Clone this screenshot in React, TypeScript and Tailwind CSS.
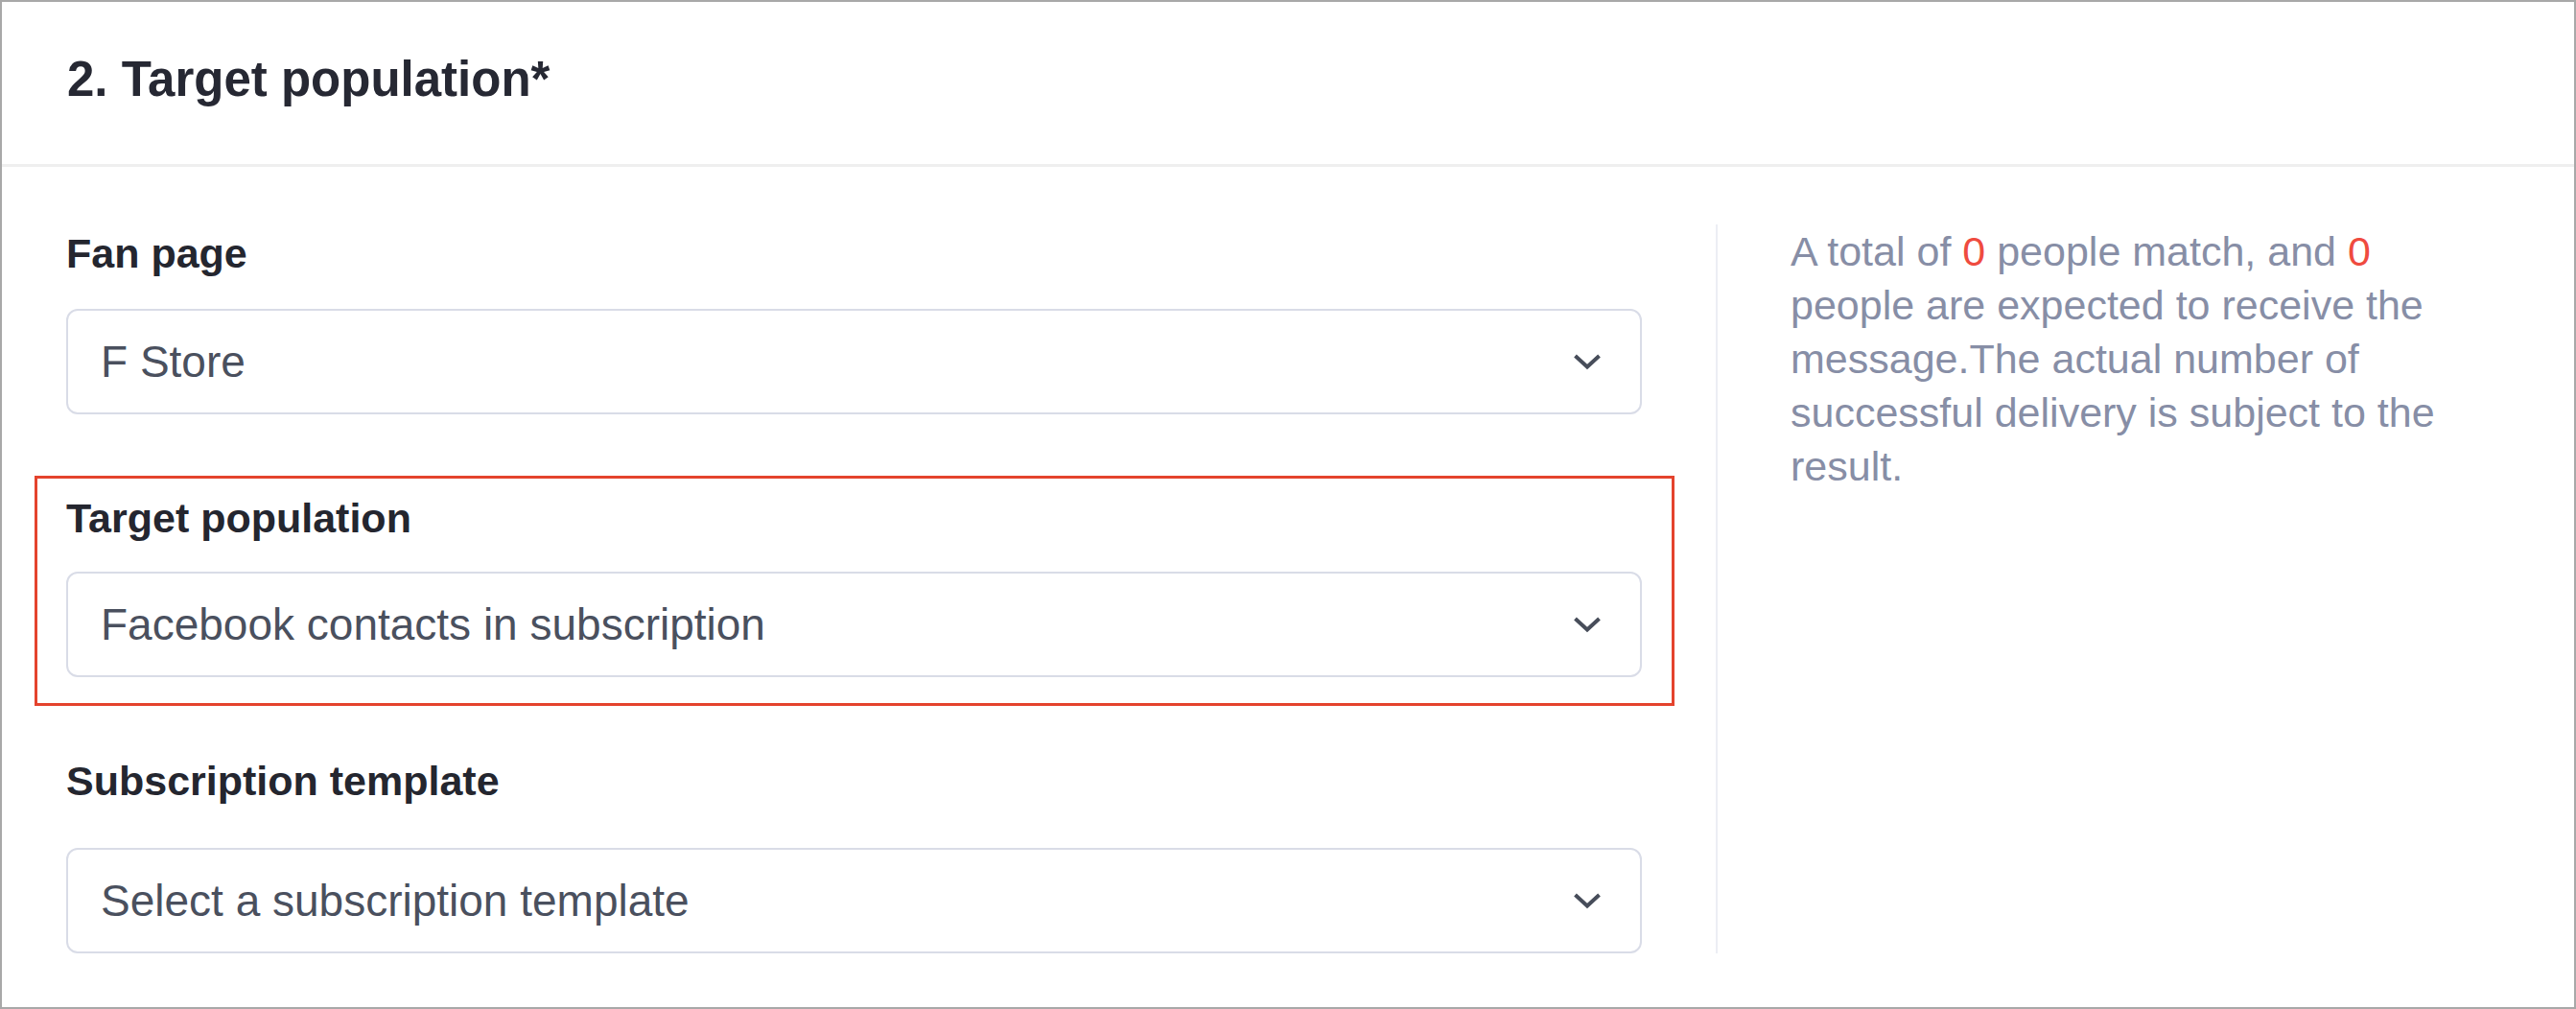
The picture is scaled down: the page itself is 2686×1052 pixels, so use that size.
import React from 'react';

const font = { fontFamily: '"Liberation Sans", Arial, sans-serif' };

function Chevron() {
  return (
    <svg width="30" height="18" viewBox="0 0 30 18" fill="none" className="shrink-0">
      <path d="M2.5 3 L15 14.5 L27.5 3" stroke="#474d5a" strokeWidth="4" strokeLinejoin="miter" />
    </svg>
  );
}

function SelectBox({ value }: { value: string }) {
  return (
    <div className="flex h-[110px] items-center justify-between rounded-[12px] border-2 border-[#d9dce7] bg-white pl-[34px] pr-[40px]">
      <span className="text-[46px] text-[#4a505e]">{value}</span>
      <Chevron />
    </div>
  );
}

function Field({ label, value, gap }: { label: string; value: string; gap: string }) {
  return (
    <div>
      <div className={`text-[43px] font-bold leading-[60px] text-[#24262f] ${gap}`}>{label}</div>
      <SelectBox value={value} />
    </div>
  );
}

export default function App() {
  return (
    <div style={font} className="box-border flex h-[1052px] w-[2686px] flex-col border-2 border-[#a8a8a8] bg-white">
      <header className="h-[169px] shrink-0 pl-[68px] pt-[51px]">
        <h2 className="text-[51px] font-bold leading-[60px] text-[#262833]">2. Target population*</h2>
      </header>
      <div className="h-[3px] shrink-0 bg-[#efefef]" />

      <div className="flex pl-[67px] pt-[60px]">
        <div className="flex w-[1643px] shrink-0 flex-col gap-[78px]">
          <Field label="Fan page" value="F Store" gap="mb-[28px]" />
          <div className="relative">
            <div className="pointer-events-none absolute -bottom-[30px] -left-[33px] -right-[34px] -top-[14px] border-[3px] border-[#e4432d]" />
            <Field label="Target population" value="Facebook contacts in subscription" gap="mb-[26px]" />
          </div>
          <Field label="Subscription template" value="Select a subscription template" gap="mb-[40px]" />
        </div>

        <div className="ml-[77px] flex-1 border-l-2 border-[#eceef4] pl-[76px]">
          <p className="w-[700px] text-[43px] leading-[56px] text-[#878ea6]">
            A total of <span className="text-[#ef4b3f]">0</span> people match, and{' '}
            <span className="text-[#ef4b3f]">0</span> people are expected to receive the message.The actual
            number of successful delivery is subject to the result.
          </p>
        </div>
      </div>
    </div>
  );
}
